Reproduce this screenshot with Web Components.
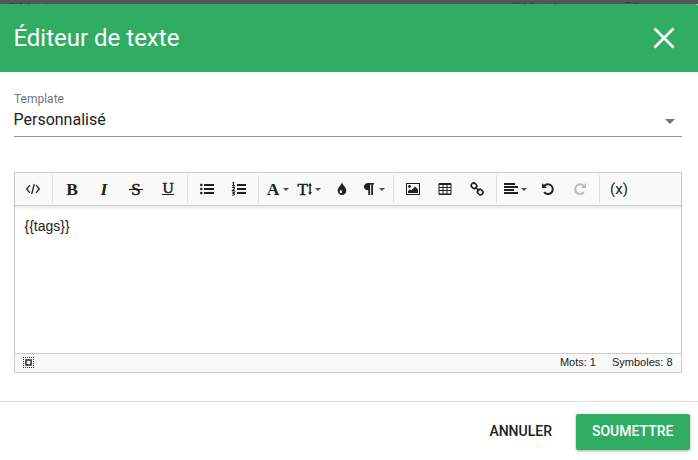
<!DOCTYPE html>
<html lang="fr">
<head>
<meta charset="utf-8">
<title>Éditeur de texte</title>
<style>
html,body{margin:0;height:100%;overflow:hidden}
body{font-family:Roboto,sans-serif;background:#fff;color:#212121}
</style>
</head>
<body>
<editor-dialog></editor-dialog>
<script>
const define = (name, html, setup) => customElements.define(name, class extends HTMLElement {
  constructor() {
    super();
    const t = document.createElement('template');
    t.innerHTML = html;
    this.attachShadow({mode: 'open'}).append(t.content.cloneNode(true));
  }
  connectedCallback() { if (setup) setup(this); }
});

const serif = (s, size, x, extra = '', y = 12) =>
  `<text x="${x}" y="${y}" text-anchor="middle" font-family="Liberation Serif,serif" font-weight="bold" font-size="${size}" ${extra}>${s}</text>`;
const icons = {
  source: '<path d="M3.9 3.2.7 7l3.2 3.8M10.1 3.2 13.3 7l-3.2 3.8M8.3 2 5.7 12" fill="none" stroke="currentColor" stroke-width="1.3"/>',
  bold: serif('B', 17.5, 7, '', 12.8),
  italic: serif('I', 17.5, 7, 'font-style="italic"', 12.8),
  strike: serif('S', 17, 7, 'style="font-weight:400" stroke="currentColor" stroke-width=".5"', 12.7) + '<path d="M0 7h14v1H0z"/>',
  underline: serif('U', 15.5, 7, 'style="font-weight:400" stroke="currentColor" stroke-width=".5"', 10.9) + '<path d="M1 12h12v1H1z"/>',
  ul: '<path d="M4 2h10v2H4zM4 6h10v2H4zM4 10h10v2H4z"/><circle cx="1.3" cy="3" r="1.3"/><circle cx="1.3" cy="7" r="1.3"/><circle cx="1.3" cy="11" r="1.3"/>',
  ol: '<path d="M5 2h9v2H5zM5 6h9v2H5zM5 10h9v2H5z"/><path d="M.4 1.1 1.5.4V3.6M.3 3.6h2.5M.3 5.4h2.1v1.2L.5 8.5h2.3M.3 10.1h2.2L1.3 11.4c2 0 1.5 2.1-1 1.6" fill="none" stroke="currentColor" stroke-width="1.1"/>',
  font: serif('A', 17.5, 7, '', 12.8),
  size: serif('T', 17, 4.8, 'style="font-weight:400" stroke="currentColor" stroke-width=".5"', 12.8) + '<path d="M12.1 3v8" stroke="currentColor" stroke-width="1.5"/><path d="m12.1 1 1.9 2.7h-3.8zM12.1 13l-1.9-2.7h3.8z"/>',
  drop: '<path fill-rule="evenodd" d="M7 .5c.5 2.200 4.300 5 4.300 8.300a4.300 4.300 0 0 1-8.600 0C2.700 5.500 6.500 2.700 7 .5zM5.200 8.400C4 10 5 11.300 6.600 11c.8-.5.7-1.500.1-2C6.200 8.600 6.300 8 6.200 7.300z"/>',
  para: '<path d="M12 1v1.500h-1v10.500H9.200V2.500H8.100v10.500H6.300V8.200C3.600 8.200 2 6.800 2 4.700S3.600 1 6.400 1z"/>',
  image: '<path fill-rule="evenodd" d="M0 1h14v12H0zM1 2v10h12V2z"/><circle cx="3.500" cy="4.500" r="1.400"/><path d="M2 11V9.200l2-2 1.200 1.200L9 4.500l3 3V11z"/>',
  table: '<path fill-rule="evenodd" d="M1.500 1h11A1 1 0 0 1 13.500 2v10a1 1 0 0 1-1 1h-11a1 1 0 0 1-1-1V2a1 1 0 0 1 1-1zM1.500 3v2h3V3zM5.500 3v2h3V3zM9.500 3v2h3V3zM1.500 6v2h3V6zM5.500 6v2h3V6zM9.500 6v2h3V6zM1.500 9v2.500h3V9zM5.500 9v2.500h3V9zM9.500 9v2.500h3V9z"/>',
  link: '<g fill="none" stroke="currentColor" stroke-width="1.600"><rect x="1.200" y="1.400" width="5.600" height="4.800" rx="2.200" transform="rotate(45 4 3.800)"/><rect x="7.400" y="7.700" width="5.600" height="4.800" rx="2.200" transform="rotate(45 10.200 10.100)"/><path d="m5.300 5.200 3.900 3.800"/></g>',
  align: '<path d="M0 1h11v2H0zM0 4h14v2H0zM0 7h10v2H0zM0 10h14v2H0z"/>',
  undo: '<path d="M3.200 3.900A4.900 4.900 0 1 1 3.100 10.200" fill="none" stroke="currentColor" stroke-width="2"/><path d="M1 1v5h5z"/>',
  redo: '<path d="M10.800 3.900A4.900 4.900 0 1 0 10.900 10.200" fill="none" stroke="currentColor" stroke-width="2"/><path d="M13 1v5H8z"/>',
};

define('tool-button', `
<style>
:host{display:flex;width:32px;height:32px;align-items:center;justify-content:center;color:#212121;font:15px Roboto,sans-serif}
:host([disabled]){color:#bbb}
svg{width:14px;height:14px;overflow:visible;fill:currentColor;flex:none}
i{display:none;border:3px solid transparent;border-top-color:#4c4c4c;border-bottom:0;margin-left:3px;width:0;height:0}
:host([menu]) i{display:block}
:host([menu]){justify-content:flex-start;padding-left:4px;width:28px}
</style><svg viewBox="0 0 14 14"></svg><slot></slot><i></i>`, el => {
  const svg = el.shadowRoot.querySelector('svg');
  const icon = el.getAttribute('icon');
  if (icon) svg.innerHTML = icons[icon]; else svg.remove();
});
define('tool-separator', `<style>:host{display:block;width:1px;height:28px;margin:0 3px;background:#e0e0e0}</style>`);

define('dialog-header', `
<style>
:host{display:flex;height:68px;box-sizing:border-box;padding:0 22.500px 0 13.400px;align-items:center;justify-content:space-between;background:#31ac65;color:#fff;border-radius:0 2px 0 0}
h1{font-size:24px;font-weight:400;line-height:32px;margin:0}
svg{width:24px;height:24px}
</style><h1><slot></slot></h1>
<svg viewBox="0 0 24 24" fill="none" stroke="#fff" stroke-width="2.700"><path d="m2.500 2.500 19 19m0-19-19 19"/></svg>`);

define('select-field', `
<style>
:host{display:block;height:48px;margin:17px 16px 0 14px;border-bottom:1px solid #949494;box-sizing:border-box}
label{display:block;font-size:12px;line-height:14px;color:#757575;padding-top:3px}
div{display:flex;align-items:center;justify-content:space-between;font-size:16px;line-height:24px;margin:2px 0 0 -.5px;padding-right:7.500px}
i{border:5px solid transparent;border-top-color:#757575;border-bottom:0;margin-top:2px}
</style><label><slot name="label"></slot></label><div><slot></slot><i></i></div>`);

define('rich-editor', `
<style>
:host{display:flex;flex-direction:column;box-sizing:border-box;height:201px;margin:35px 16px 0 14px;border:1px solid #ccc}
nav{display:flex;align-items:center;height:32px;background:#f9f9f9;border-bottom:1px solid #ccc;padding-left:2px;box-shadow:0 2px 3px rgba(0,0,0,.1)}
main{flex:1;padding:11px 9.500px;font:14px/18px "Liberation Sans",Arial,sans-serif}
footer{height:18px;display:flex;align-items:center;background:#f9f9f9;border-top:1px solid #ccc;font:11px/16px "Liberation Sans",Arial,sans-serif;padding:0 8.500px 0 8px;gap:16px}
footer svg{margin:-1px auto 0 0;width:11px;height:11px}
footer slot{display:block;height:18px}
</style>
<nav>
<tool-button icon="source"></tool-button><tool-separator></tool-separator>
<tool-button icon="bold"></tool-button><tool-button icon="italic"></tool-button><tool-button icon="strike"></tool-button><tool-button icon="underline"></tool-button><tool-separator></tool-separator>
<tool-button icon="ul"></tool-button><tool-button icon="ol"></tool-button><tool-separator></tool-separator>
<tool-button icon="font" menu></tool-button><tool-button icon="size" menu></tool-button><tool-button icon="drop"></tool-button><tool-button icon="para" menu></tool-button><tool-separator></tool-separator>
<tool-button icon="image"></tool-button><tool-button icon="table"></tool-button><tool-button icon="link"></tool-button><tool-separator></tool-separator>
<tool-button icon="align" menu></tool-button><tool-button icon="undo"></tool-button><tool-button icon="redo" disabled></tool-button><tool-separator></tool-separator>
<tool-button>(x)</tool-button>
</nav>
<main><slot></slot></main>
<footer><svg viewBox="0 0 11 11" fill="none" stroke="#333"><path d="M0 .5h11M0 10.500h11M.5 0v11M10.500 0v11" stroke-dasharray="1 1"/><rect x="3" y="3" width="5" height="5" stroke-width="1.600"/></svg><slot name="words"></slot><slot name="chars"></slot></footer>`);

define('action-button', `
<style>
:host{display:flex;height:36px;align-items:center;padding:0 16px;border-radius:2px;font-size:14px;font-weight:500;line-height:34px;box-sizing:border-box;padding-bottom:2px;color:#212121}
:host([primary]){background:#31ac65;color:#fff;width:114px;box-shadow:0 1px 3px rgba(0,0,0,.35)}
</style><slot></slot>`);

define('page-strip', `
<style>
:host{display:block;height:4px;overflow:hidden;background:#555}
svg{display:block;width:698px;height:4px}
</style><svg viewBox="0 0 698 4" fill="none" stroke="#3c3c3c"><path d="M10 3.500h3M20 3.500h2M28 3.500l2-1M47 3v1M512 4c1-2 6-2 7 0M524 3.500l2-1M532 2v2M547 3v1M555 2v2M626 4V2.500h5M634 2v1.500M637 2v2"/></svg>`);

define('editor-dialog', `
<style>
:host{display:flex;flex-direction:column;height:460px}
footer{display:flex;justify-content:flex-end;align-items:flex-start;gap:8px;margin-top:28px;border-top:1px solid #e0e0e0;padding:12px 8px 0 0;flex:1}
</style>
<page-strip></page-strip>
<dialog-header>Éditeur de texte</dialog-header>
<select-field><span slot="label">Template</span><span>Personnalisé</span></select-field>
<rich-editor>{{tags}}<span slot="words">Mots: 1</span><span slot="chars">Symboles: 8</span></rich-editor>
<footer><action-button>ANNULER</action-button><action-button primary>SOUMETTRE</action-button></footer>`);
</script>
</body>
</html>
